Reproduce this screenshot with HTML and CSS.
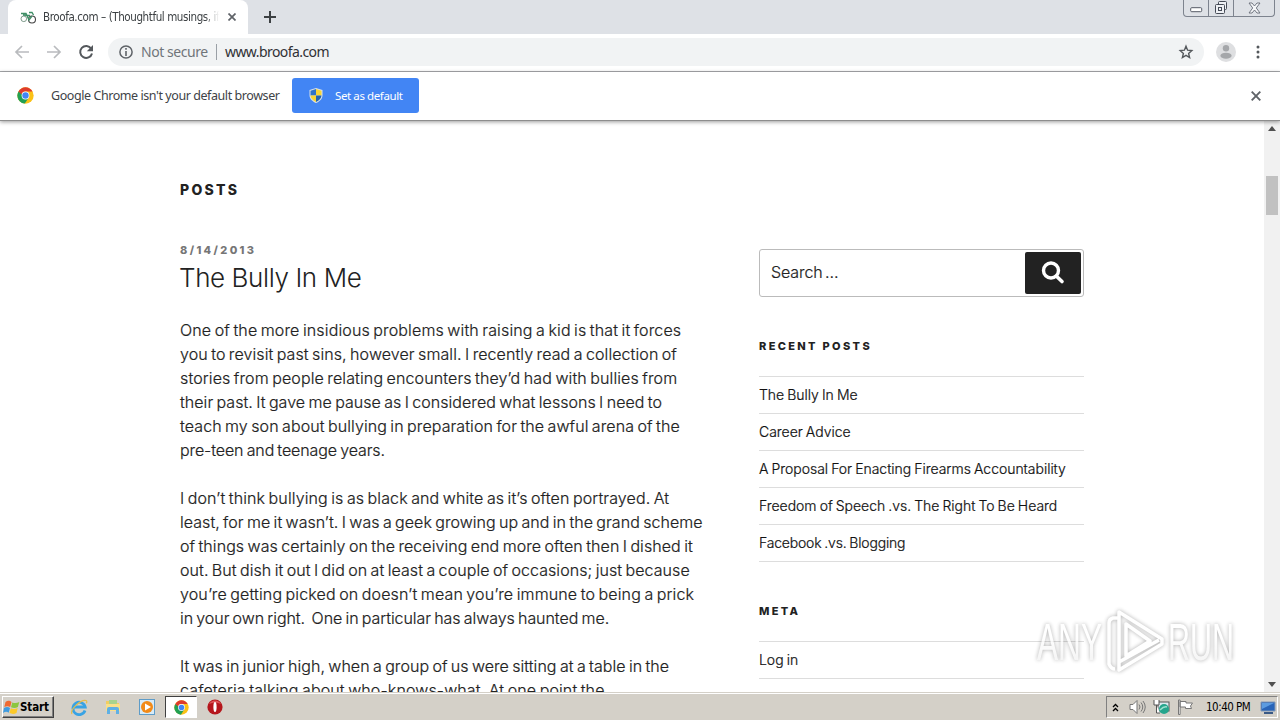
FILE: index.html
```html
<!DOCTYPE html>
<html lang="en">
<head>
<meta charset="utf-8">
<title>Broofa.com</title>
<link rel="stylesheet" href="styles.css">
</head>
<body>
<svg class="defs" width="0" height="0">
  <symbol id="chrome" viewBox="0 0 48 48">
    <circle cx="24" cy="24" r="23" fill="#fbc116"/>
    <path d="M4.100 12.500A23 23 0 0 0 22 46.900L33 30 24 24z" fill="#21a053"/>
    <path d="M4.100 12.500A23 23 0 0 1 43.900 12.500H24A11.500 11.500 0 0 0 13 21z" fill="#de3b2d"/>
    <circle cx="24" cy="24" r="11" fill="#fff"/><circle cx="24" cy="24" r="9" fill="#4285f4"/>
  </symbol>
</svg>
<div class="screen">
  <header class="tabstrip">
    <div class="tab">
      <svg class="favicon" width="17" height="14" viewBox="0 0 17 14" fill="none"><circle cx="3.800" cy="8.800" r="2.800" stroke="#7d9a8a"/><circle cx="12" cy="9.500" r="3.500" stroke="#444" stroke-width="1.100"/><path d="M1 3.500h5l3 6.500 3-4M3 5l7 .5M9 2.500h3l1.500 2.500" stroke="#3f8f66" stroke-width="1.400"/></svg>
      <span class="tab-title">Broofa.com – (Thoughtful musings, if</span>
      <svg class="tab-close" width="8" height="8" viewBox="0 0 8 8"><path d="M.5.5l7 7m0-7l-7 7" stroke="#5f6368" stroke-width="1.700"/></svg>
    </div>
    <svg class="newtab" width="12" height="12" viewBox="0 0 12 12"><path d="M6 0v12M0 6h12" stroke="#3c4043" stroke-width="2"/></svg>
    <div class="caption">
      <span class="cap-min"><svg width="13" height="6" viewBox="0 0 13 6"><rect x=".7" y=".7" width="11" height="4" rx="1" fill="#fff" stroke="#555b66"/></svg></span>
      <span class="cap-max"><svg width="14" height="14" viewBox="0 0 14 14" fill="#eef0f4" stroke="#454b56"><rect x="4.500" y=".5" width="8" height="8" rx="1"/><rect x="1.500" y="3.500" width="9" height="9" rx="1"/><rect x="4.500" y="6.500" width="3" height="3"/></svg></span>
      <span class="cap-close"><svg width="13" height="12" viewBox="0 0 13 12"><path d="M1 1h3l2.500 3L9 1h3L8.300 6 12 11H9L6.500 8 4 11H1l3.700-5z" fill="#f5f6f8" stroke="#666c77" stroke-width=".9"/></svg></span>
    </div>
  </header>
  <nav class="toolbar">
    <svg class="nav-icon" width="16" height="16" viewBox="0 0 16 16" fill="none" stroke="#b9bbbe" stroke-width="1.700"><path d="M15 8H2M8 2 2 8l6 6"/></svg>
    <svg class="nav-icon" width="16" height="16" viewBox="0 0 16 16" fill="none" stroke="#b9bbbe" stroke-width="1.700"><path d="M1 8h13M8 2l6 6-6 6"/></svg>
    <svg class="nav-icon" width="16" height="16" viewBox="0 0 16 16"><path d="M13.200 4.600A6 6 0 1 0 14 9.500" fill="none" stroke="#54585c" stroke-width="2"/><path d="M15 1v6.200H8.800z" fill="#54585c"/></svg>
    <div class="omnibox">
      <svg width="14" height="14" viewBox="0 0 14 14"><circle cx="7" cy="7" r="6.100" fill="none" stroke="#5f6368" stroke-width="1.500"/><path d="M7 3v1.800M7 6v5" stroke="#5f6368" stroke-width="1.600"/></svg>
      <span class="insecure">Not secure</span>
      <span class="divider"></span>
      <span class="url">www.broofa.com</span>
      <svg class="star" width="16" height="16" viewBox="0 0 16 16"><path d="m8 2.200 1.600 4 4.200.4-3.200 2.800 1 4.200L8 11.400l-3.600 2.200 1-4.200-3.200-2.800 4.200-.4z" fill="none" stroke="#54585c" stroke-width="1.400"/></svg>
    </div>
    <svg class="avatar" width="20" height="20" viewBox="0 0 20 20"><circle cx="10" cy="10" r="10" fill="#dedfe1"/><circle cx="10" cy="6.300" r="3.200" fill="#a5a7aa"/><ellipse cx="10" cy="13.700" rx="5.600" ry="3" fill="#a5a7aa"/></svg>
    <svg class="kebab" width="4" height="14" viewBox="0 0 4 14" fill="#54585c"><circle cx="2" cy="2" r="1.500"/><circle cx="2" cy="7" r="1.500"/><circle cx="2" cy="12" r="1.500"/></svg>
  </nav>
  <section class="infobar">
    <svg width="17" height="17"><use href="#chrome"/></svg>
    <span class="info-text">Google Chrome isn't your default browser</span>
    <div class="default-btn">
      <svg width="14" height="15" viewBox="0 0 14 15"><path d="M7 0 13.500 2v5c0 4-3 6.500-6.500 8C3.500 13.500.5 11 .5 7V2z" fill="#d9e2e8"/><path d="M7 1v6.500H1.500V2.700z" fill="#2e73c9"/><path d="M7 1v6.500h5.500V2.700z" fill="#f7d535"/><path d="M7 7.500V14C4 12.500 1.600 10.500 1.500 7.500z" fill="#f7d535"/><path d="M7 7.500V14c3-1.500 5.400-3.500 5.500-6.500z" fill="#2464ad"/></svg>
      <span>Set as default</span>
    </div>
    <svg class="info-close" width="10" height="10" viewBox="0 0 10 10"><path d="M.7.700l8.600 8.600m0-8.600L.7 9.300" stroke="#5f6368" stroke-width="1.900"/></svg>
  </section>
  <main class="viewport">
    <div class="page">
      <h1 class="page-title">POSTS</h1>
      <div class="columns">
        <article class="post">
          <div class="date">8/14/2013</div>
          <h2 class="post-title">The Bully In Me</h2>
          <p><span class="l1">One of the more insidious problems with raising a kid is that it forces</span><br><span class="l2">you to revisit past sins, however small. I recently read a collection of</span><br><span class="l3">stories from people relating encounters they’d had with bullies from</span><br><span class="l4">their past. It gave me pause as I considered what lessons I need to</span><br><span class="l5">teach my son about bullying in preparation for the awful arena of the</span><br><span class="l6">pre-teen and teenage years.</span></p>
          <p><span class="l7">I don’t think bullying is as black and white as it’s often portrayed. At</span><br><span class="l8">least, for me it wasn’t. I was a geek growing up and in the grand scheme</span><br><span class="l9">of things was certainly on the receiving end more often then I dished it</span><br><span class="l10">out. But dish it out I did on at least a couple of occasions; just because</span><br><span class="l11">you’re getting picked on doesn’t mean you’re immune to being a prick</span><br><span class="l12">in your own right.&nbsp; One in particular has always haunted me.</span></p>
          <p><span class="l13">It was in junior high, when a group of us were sitting at a table in the</span><br><span class="l14">cafeteria talking about who-knows-what. At one point the</span></p>
        </article>
        <aside class="sidebar">
          <div class="search"><span class="placeholder">Search …</span>
            <div class="search-btn"><svg width="24" height="24" viewBox="0 0 24 24" fill="none" stroke="#fff"><circle cx="10" cy="9.500" r="7.500" stroke-width="3.400"/><path d="m15.500 15.200 5.500 5.300" stroke-width="3.600" stroke-linecap="round"/></svg></div>
          </div>
          <h3 class="widget-title">RECENT POSTS</h3>
          <ul class="links">
            <li><span class="s1">The Bully In Me</span></li>
            <li><span class="s2">Career Advice</span></li>
            <li><span class="s3">A Proposal For Enacting Firearms Accountability</span></li>
            <li><span class="s4">Freedom of Speech .vs. The Right To Be Heard</span></li>
            <li><span class="s5">Facebook .vs. Blogging</span></li>
          </ul>
          <h3 class="widget-title">META</h3>
          <ul class="links">
            <li><span class="s6">Log in</span></li>
            <li class="s7"><span>Entries feed</span></li>
          </ul>
        </aside>
      </div>
    </div>
    <div class="scrollbar">
      <svg width="8" height="5" viewBox="0 0 8 5"><path d="M0 5 4 0l4 5z" fill="#505050"/></svg>
      <div class="thumb"></div>
      <svg class="down" width="8" height="5" viewBox="0 0 8 5"><path d="m0 0 4 5 4-5z" fill="#505050"/></svg>
    </div>
  </main>
  <footer class="taskbar">
    <div class="start">
      <svg width="17" height="16" viewBox="0 0 17 16"><path d="M2.500 3C5 1 7 2 8.500 3L7.200 8C5.500 7 3.500 6.700 1.300 8z" fill="#ef6a32"/><path d="M9.300 3.400c2 1 4.500 1 7-.4l-1.400 5C12.500 9.300 10 9 8 8.200z" fill="#8cc63e"/><path d="M1 9c2.300-1.400 4.400-1 6-.1l-1.300 4.800C4 12.600 2.200 12.500 0 14z" fill="#3e9be0"/><path d="M7.800 9.300c2 .9 4.500 1 6.900-.2L13.500 14c-2.500 1.300-5 1-7 .1z" fill="#fcc928"/></svg>
      <span>Start</span>
    </div>
    <div class="quick">
      <svg width="18" height="18" viewBox="0 0 18 18" fill="none"><path d="M15 12.500A6.200 6.200 0 1 1 15.200 9H4" stroke="#39a3e4" stroke-width="2.800"/><path d="M2 16C-.5 12 11 1 16 2.500c1 .3 1 1.500.3 2.800" stroke="#e6bd4b" stroke-width="1.200"/></svg>
      <svg width="18" height="18" viewBox="0 0 18 18"><path d="M2 3h6l1 2h6v8H2z" fill="#f2cd62"/><path d="M5 2h8v4H5z" fill="#a8d38d"/><path d="M2 6h14v7H2z" fill="#f9e08a"/><path d="M3 16v-5q0-2 2-2h8q2 0 2 2v5h-3v-4H6v4z" fill="#5fb0e4"/></svg>
      <svg width="18" height="18" viewBox="0 0 18 18"><rect x="1.500" y="1.500" width="15" height="15" fill="#d7ebf8" stroke="#5e9cc8"/><circle cx="9" cy="9" r="6" fill="#f28a18"/><path d="m7 5.500 6 3.500-6 3.500z" fill="#fff"/></svg>
      <div class="active"><svg width="15" height="15"><use href="#chrome"/></svg></div>
      <svg width="18" height="18" viewBox="0 0 18 18"><circle cx="9" cy="9" r="7.600" fill="#b5161c"/><path d="M3 6a7 7 0 0 1 12 0Q9 3 3 6" fill="#de5558"/><ellipse cx="9" cy="9" rx="1.600" ry="5" fill="#fff"/></svg>
    </div>
    <div class="tray">
      <svg width="7" height="9" viewBox="0 0 7 9" fill="none" stroke="#000" stroke-width="1.300"><path d="m1 4 2.500-2.500L6 4M1 8l2.500-2.500L6 8"/></svg>
      <svg class="speaker" width="17" height="16" viewBox="0 0 17 16" fill="none" stroke="#777"><path d="M1 5.500h3l4-4v13l-4-4H1z" fill="#fff"/><path d="M10 5.500q2 2.500 0 5M12 3.500q3.500 4.500 0 9M14 2q4.500 6 0 12"/></svg>
      <svg class="net" width="17" height="16" viewBox="0 0 17 16"><rect x="5" y="3" width="11" height="9" fill="#dceaf0" stroke="#555"/><path d="M1 1v5h5V1M3.500 6v8H7" fill="#fff" stroke="#555"/><circle cx="11" cy="10" r="5" fill="#25a58c"/><path d="M7 11q4-4 7-3" stroke="#9ce0cf" stroke-width="1.500" fill="none"/></svg>
      <svg class="flag" width="17" height="16" viewBox="0 0 17 16" fill="#fff" stroke="#777"><path d="M1.500 1v14.500h1.600V1zM3 2.500h6V4h6.500l-2 3 1 2.500H8.500V8H3z"/></svg>
      <span class="clock">10:40 PM</span>
      <svg class="desk" width="16" height="13" viewBox="0 0 16 13"><path d="M1 1h14v9H1z" fill="#2864b8" stroke="#8298b5"/><path d="M2 2h12L2 8z" fill="#5b9be0"/><path d="M4 12h9" stroke="#3a5a86" stroke-width="2"/></svg>
    </div>
  </footer>
  <svg class="watermark" width="204" height="72" viewBox="0 0 204 72">
    <defs><linearGradient id="fade" x1="0" y1="0" x2="0" y2="1"><stop offset=".4" stop-color="#fff"/><stop offset="1" stop-color="#eee"/></linearGradient></defs>
    <text x="4" y="56" textLength="65" lengthAdjust="spacingAndGlyphs" fill="url(#fade)">ANY</text>
    <path d="M86 8v52M86 8l43 27v5L86 66zM86 14H80q-4 1-4 5v41q2 5 6 5M93 20v32l24-15zM86 58l40-22" fill="none" stroke="#fff" stroke-width="3.500" stroke-linejoin="round"/>
    <text x="135" y="56" textLength="66" lengthAdjust="spacingAndGlyphs" fill="url(#fade)">RUN</text>
  </svg>
</div>
</body>
</html>
```
FILE: styles.css
```css
* { box-sizing: border-box; }
body { margin: 0; background: #fff; overflow: hidden; font-family: "DejaVu Sans Condensed", "DejaVu Sans", sans-serif; }
svg { display: block; flex: none; }
.defs { position: absolute; }
.screen { position: relative; width: 1280px; height: 720px; display: flex; flex-direction: column; overflow: hidden; white-space: nowrap; }
.tabstrip { height: 34px; flex: none; background: #dee1e6; display: flex; align-items: flex-start; padding-left: 8px; }
.tab { width: 240px; height: 34px; background: #fff; border-radius: 8px 8px 0 0; display: flex; align-items: center; padding-left: 12px; }
.tab-title { width: 176px; margin-left: 6px; overflow: hidden; font: 11.500px "DejaVu Sans Condensed", sans-serif; letter-spacing: -.4px; color: #3c4043; -webkit-mask-image: linear-gradient(90deg, #000 92%, transparent); mask-image: linear-gradient(90deg, #000 92%, transparent); }
.tab-close { margin-left: 9px; }
.newtab { margin: 11px 0 0 16px; }
.caption { margin: 0 5px 0 auto; width: 92px; height: 17px; display: flex; border: 1px solid #7d838e; border-top: 0; border-radius: 0 0 4px 4px; }
.caption span { display: flex; align-items: center; justify-content: center; }
.cap-min { width: 25px; padding-top: 4px; border-right: 1px solid #7d838e; }
.cap-max { width: 25px; border-right: 1px solid #7d838e; }
.cap-close { flex: 1; }
.toolbar { height: 38px; flex: none; border-bottom: 1px solid #a9abae; display: flex; align-items: center; padding: 0 0 1px 14px; }
.nav-icon { margin-right: 16px; }
.omnibox { width: 1096px; height: 28px; margin-left: -2px; border-radius: 14px; background: #f1f3f4; display: flex; align-items: center; padding: 0 10px 0 11px; font: 14px "Noto Sans", sans-serif; }
.insecure { width: 67px; margin: -1px 0 0 8px; letter-spacing: -.44px; color: #70757a; }
.divider { width: 1px; height: 16px; margin: 0 8px; background: #9aa0a6; }
.url { margin-top: -1px; letter-spacing: -.57px; color: #303135; }
.star { margin-left: auto; }
.avatar { margin-left: 12px; }
.kebab { margin-left: 20px; }
.infobar { height: 49px; flex: none; display: flex; align-items: center; padding: 0 0 1px 17px; border-bottom: 1px solid #8d8d8d; box-shadow: 0 1px 4px #0006; z-index: 2; background: #fff; }
.info-text { width: 229px; margin-left: 17px; font: 12.500px "Noto Sans", sans-serif; letter-spacing: -.43px; color: #404347; }
.default-btn { width: 127px; height: 35px; margin-left: 12px; border-radius: 3px; background: #4285f4; color: #fff; display: flex; align-items: center; padding-left: 17px; font: 11.500px "Noto Sans", sans-serif; letter-spacing: -.4px; }
.default-btn span { margin-left: 12px; }
.info-close { margin: 0 19px 0 auto; }
.viewport { flex: 1; min-height: 0; display: flex; overflow: hidden; font-family: Inter, sans-serif; }
.page { width: 1264px; padding: 61px 180px 0; color: #222; }
.page-title { margin: 0; font: 800 14px/16px Inter, sans-serif; letter-spacing: 2.300px; color: #222; }
.columns { display: flex; justify-content: space-between; margin-top: 45px; }
.post { width: 530px; padding-top: 1px; }
.date { font: 800 11px/13px Inter, sans-serif; letter-spacing: 2.350px; color: #767676; }
.post-title { margin: 3px 0 0 -1px; font: 300 26px/36px Inter, sans-serif; letter-spacing: -.4px; color: #222; }
.post p { margin: 0 0 24px; font: 300 16px/24px Inter, sans-serif; letter-spacing: -.18px; word-spacing: -1.200px; -webkit-text-stroke: .2px #222; }
.post .post-title + p { margin-top: 22px; }
.post .l1, .post .l11 { letter-spacing: .14px; }
.post .l2, .post .l5 { letter-spacing: .09px; }
.post .l3, .post .l7, .post .l14 { letter-spacing: .12px; }
.post .l4, .post .l8, .post .l13 { letter-spacing: .045px; }
.post .l6 { letter-spacing: -.1px; }
.post .l9, .post .l10 { letter-spacing: .07px; }
.post .l12 { letter-spacing: -.05px; }
.sidebar { width: 325px; }
.search { height: 48px; margin-top: 6px; border: 1px solid #bbb; border-radius: 3px; display: flex; align-items: center; justify-content: space-between; padding: 0 2px 0 11px; font-size: 16px; font-weight: 300; }
.placeholder { margin-top: -2px; letter-spacing: -.1px; word-spacing: -2px; -webkit-text-stroke: .2px #222; }
.search-btn { width: 56px; height: 42px; border-radius: 2px; background: #222; display: flex; align-items: center; justify-content: center; }
.widget-title { margin: 41px 0 0; font: 800 11px/16px Inter, sans-serif; letter-spacing: 2.350px; color: #222; }
.links { margin: 22px 0 0; padding: 0; list-style: none; border-top: 1px solid #ddd; }
.links li { height: 37px; border-bottom: 1px solid #ddd; font-size: 14px; font-weight: 300; line-height: 36px; letter-spacing: -.03px; word-spacing: -.8px; color: #111; -webkit-text-stroke: .2px #111; }
.links .s5 { letter-spacing: -.2px; }
.links .s7 { line-height: 37px; word-spacing: 3px; }
.scrollbar { width: 16px; background: #f1f1f1; display: flex; flex-direction: column; align-items: center; padding: 5px 0; }
.thumb { width: 12px; height: 39px; margin-top: 45px; background: #c1c1c1; }
.down { margin-top: auto; }
.taskbar { height: 28px; flex: none; background: #d4d0c8; border-top: 1px solid #d4d0c8; box-shadow: inset 0 1px #fff; display: flex; align-items: center; padding: 1px 2px 0 2px; }
.start { width: 52px; height: 22px; border: 1px solid; border-color: #fff #404040 #404040 #fff; box-shadow: inset -1px -1px #808080; display: flex; align-items: center; padding-left: 0; font: bold 11.500px "DejaVu Sans Condensed", sans-serif; letter-spacing: -.1px; color: #000; }
.quick { display: flex; align-items: center; margin-left: 16px; gap: 16px; }
.active { width: 32px; height: 22px; margin: 0 -7px; background: #fff; border: 1px solid; border-color: #404040 #fff #fff #404040; display: flex; align-items: center; justify-content: center; }
.tray { width: 172px; height: 22px; margin-left: auto; border: 1px solid; border-color: #808080 #fff #fff #808080; display: flex; align-items: center; padding-left: 5px; }
.speaker { margin-left: 10px; }
.net, .flag { margin-left: 7px; }
.clock { width: 45px; margin-left: 12px; font: 11.500px "DejaVu Sans Condensed", sans-serif; letter-spacing: -.5px; color: #000; }
.desk { margin-left: 9px; }
.watermark { position: absolute; left: 1033px; top: 604px; z-index: 3; overflow: visible; font: 51px "Liberation Sans", sans-serif; filter: drop-shadow(0 0 2px #0006); opacity: .8; }
```
